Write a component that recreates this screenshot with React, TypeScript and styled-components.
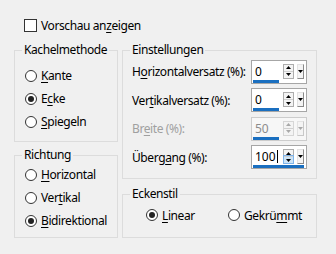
import styled, { createGlobalStyle } from "styled-components";

const GlobalStyle = createGlobalStyle`
  body {
    margin: 0;
    background: #f0f0f0;
  }
  * {
    box-sizing: border-box;
  }
`;

const Dialog = styled.div`
  width: 336px;
  height: 254px;
  padding: 19px 0 0 14px;
  font-family: "Noto Sans", "Open Sans", sans-serif;
  font-size: 12px;
  letter-spacing: -0.4px;
  color: #000;
  background: #f0f0f0;
`;

const PreviewRow = styled.div`
  display: flex;
  align-items: center;
  gap: 4px;
  height: 13px;
  margin: 0 0 10px 10px;
`;

const CheckBox = styled.span`
  width: 13px;
  height: 13px;
  border: 1px solid #333;
  background: #fff;
`;

const Key = styled.span`
  text-decoration: underline;
  text-underline-offset: 2px;
`;

const Columns = styled.div`
  display: flex;
  gap: 4px;
`;

const Column = styled.div<{ $width: number; $gap: number }>`
  display: flex;
  flex-direction: column;
  width: ${(p) => p.$width}px;
  gap: ${(p) => p.$gap}px;
`;

const Group = styled.fieldset<{ $height: number }>`
  margin: 0;
  padding: 0;
  min-width: 0;
  height: ${(p) => p.$height}px;
  border: 1px solid #dcdcdc;
`;

const Legend = styled.legend`
  margin-left: 7px;
  padding: 0 2px;
  line-height: 16px;
`;

const RadioList = styled.div<{ $top: number }>`
  display: flex;
  flex-direction: column;
  padding: ${(p) => p.$top}px 0 0 10px;
`;

const RadioRow = styled.div`
  display: flex;
  align-items: center;
  gap: 4px;
  height: 23px;
`;

const RadioCircle = styled.span<{ $checked?: boolean }>`
  display: flex;
  align-items: center;
  justify-content: center;
  width: 12px;
  height: 12px;
  border: 1px solid #333;
  border-radius: 50%;
  background: #fff;

  &::after {
    content: "";
    display: ${(p) => (p.$checked ? "block" : "none")};
    width: 6px;
    height: 6px;
    border-radius: 50%;
    background: #222;
  }
`;

const SettingsList = styled.div`
  display: flex;
  flex-direction: column;
  gap: 4.5px;
  padding: 1.5px 9px 0 9px;
`;

const SpinRow = styled.div<{ $disabled?: boolean }>`
  display: flex;
  align-items: center;
  justify-content: space-between;
  height: 24px;
  color: ${(p) => (p.$disabled ? "#a0a0a0" : "#000")};
  white-space: nowrap;
`;

const SpinBox = styled.div<{ $disabled?: boolean }>`
  display: grid;
  grid-template-columns: 30px 11px 3px 7px;
  grid-template-rows: 15px 1px 3px;
  align-content: start;
  flex: none;
  width: 56px;
  height: 24px;
  padding: 3px 0 0 1px;
  border: 1px solid ${(p) => (p.$disabled ? "#cccccc" : "#a6a6a6")};
  background: ${(p) => (p.$disabled ? "#f7f7f7" : "#fff")};
  color: ${(p) => (p.$disabled ? "#8c8c8c" : "#000")};
`;

const Value = styled.span`
  grid-column: 1;
  padding-left: 2px;
  line-height: 15px;
  letter-spacing: 0;
`;

const Caret = styled.span`
  display: inline-block;
  width: 1px;
  height: 13px;
  margin-left: 1px;
  vertical-align: -2px;
  background: #000;
`;

const Bar = styled.span<{ $full?: boolean }>`
  grid-row: 3;
  grid-column: ${(p) => (p.$full ? "1 / -1" : "1")};
  width: ${(p) => (p.$full ? "100%" : "26px")};
  background: #1a6fc0;
`;

const Arrows = styled.div<{ $disabled?: boolean }>`
  grid-column: 2;
  display: flex;
  flex-direction: column;
  border: 1px solid ${(p) => (p.$disabled ? "#d6d6d6" : "#adadad")};
`;

const ArrowHalf = styled.span<{ $active?: boolean }>`
  display: flex;
  align-items: center;
  justify-content: center;
  flex: 1;
  background: ${(p) => (p.$active ? "#cce4f7" : "#f4f4f4")};
  outline: ${(p) => (p.$active ? "1px solid #7eb4ea" : "none")};

  & + & {
    border-top: 1px solid #d0d0d0;
  }
`;

const DropButton = styled.div<{ $disabled?: boolean }>`
  grid-column: 4;
  display: flex;
  align-items: center;
  justify-content: center;
  border: 1px solid #e3e3e3;
  border-right-color: ${(p) => (p.$disabled ? "#c8c8c8" : "#8a8a8a")};
  border-bottom-color: ${(p) => (p.$disabled ? "#c8c8c8" : "#8a8a8a")};
  background: #f4f4f4;
`;

const CornerRow = styled.div`
  display: grid;
  grid-template-columns: 82px auto;
  align-items: center;
  height: 26px;
  padding-left: 23px;
`;

const Triangle = ({ down, color }: { down?: boolean; color: string }) => (
  <svg width="5" height="3" viewBox="0 0 5 3">
    <path d={down ? "M0 0H5L2.5 3Z" : "M0 3H5L2.5 0Z"} fill={color} />
  </svg>
);

type SpinProps = {
  label: React.ReactNode;
  value: string;
  disabled?: boolean;
  focused?: boolean;
};

const Spin = ({ label, value, disabled, focused }: SpinProps) => {
  const arrow = disabled ? "#a8a8a8" : "#000";
  return (
    <SpinRow $disabled={disabled}>
      <span>{label}</span>
      <SpinBox $disabled={disabled}>
        <Value>
          {value}
          {focused && <Caret />}
        </Value>
        <Arrows $disabled={disabled}>
          <ArrowHalf>
            <Triangle color={arrow} />
          </ArrowHalf>
          <ArrowHalf $active={focused}>
            <Triangle down color={arrow} />
          </ArrowHalf>
        </Arrows>
        <DropButton $disabled={disabled}>
          <Triangle down color={arrow} />
        </DropButton>
        <Bar $full={focused} />
      </SpinBox>
    </SpinRow>
  );
};

type RadioProps = { checked?: boolean; children: React.ReactNode };

const Radio = ({ checked, children }: RadioProps) => (
  <RadioRow>
    <RadioCircle $checked={checked} />
    <span>{children}</span>
  </RadioRow>
);

export default function App() {
  return (
    <Dialog>
      <GlobalStyle />
      <PreviewRow>
        <CheckBox />
        <span>
          Vorschau an<Key>z</Key>eigen
        </span>
      </PreviewRow>
      <Columns>
        <Column $width={104} $gap={5}>
          <Group $height={100}>
            <Legend>Kachelmethode</Legend>
            <RadioList $top={6}>
              <Radio>
                <Key>K</Key>ante
              </Radio>
              <Radio checked>
                E<Key>c</Key>ke
              </Radio>
              <Radio>
                <Key>S</Key>piegeln
              </Radio>
            </RadioList>
          </Group>
          <Group $height={91}>
            <Legend>Richtung</Legend>
            <RadioList $top={0}>
              <Radio>
                <Key>H</Key>orizontal
              </Radio>
              <Radio>
                Ver<Key>t</Key>ikal
              </Radio>
              <Radio checked>
                <Key>B</Key>idirektional
              </Radio>
            </RadioList>
          </Group>
        </Column>
        <Column $width={195} $gap={7}>
          <Group $height={137}>
            <Legend>Einstellungen</Legend>
            <SettingsList>
              <Spin
                label={
                  <>
                    H<Key>o</Key>rizontalversatz (%):
                  </>
                }
                value="0"
              />
              <Spin
                label={
                  <>
                    Ver<Key>t</Key>ikalversatz (%):
                  </>
                }
                value="0"
              />
              <Spin
                disabled
                label={
                  <>
                    Br<Key>e</Key>ite (%):
                  </>
                }
                value="50"
              />
              <Spin
                focused
                label={
                  <>
                    Überg<Key>a</Key>ng (%):
                  </>
                }
                value="100"
              />
            </SettingsList>
          </Group>
          <Group $height={52}>
            <Legend>Eckenstil</Legend>
            <CornerRow>
              <Radio checked>
                <Key>L</Key>inear
              </Radio>
              <Radio>
                Gekrü<Key>m</Key>mt
              </Radio>
            </CornerRow>
          </Group>
        </Column>
      </Columns>
    </Dialog>
  );
}
